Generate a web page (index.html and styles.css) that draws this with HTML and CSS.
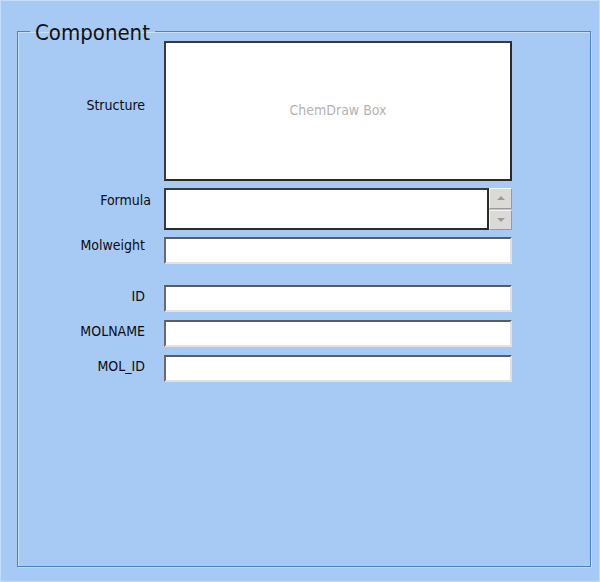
FILE: index.html
```html
<!DOCTYPE html>
<html>
<head>
<meta charset="utf-8">
<title>Component</title>
<link rel="stylesheet" href="styles.css">
</head>
<body>
<div class="window">
  <fieldset class="group">
    <legend class="group-title">Component</legend>
    <div class="rows">
      <div class="row row-structure">
        <span class="label label-structure">Structure</span>
        <div class="chemdraw">ChemDraw Box</div>
      </div>
      <div class="row row-formula">
        <span class="label label-formula">Formula</span>
        <div class="formula">
          <div class="formula-text"></div>
          <div class="spinner">
            <div class="spin-btn"><span class="arrow arrow-up"></span></div>
            <div class="spin-btn"><span class="arrow arrow-down"></span></div>
          </div>
        </div>
      </div>
      <div class="row row-mw">
        <span class="label label-mw">Molweight</span>
        <div class="field"></div>
      </div>
      <div class="row row-id">
        <span class="label">ID</span>
        <div class="field"></div>
      </div>
      <div class="row row-small">
        <span class="label">MOLNAME</span>
        <div class="field"></div>
      </div>
      <div class="row row-small">
        <span class="label">MOL_ID</span>
        <div class="field"></div>
      </div>
    </div>
  </fieldset>
</div>
</body>
</html>
```
FILE: styles.css
```css
html, body {
  margin: 0;
  padding: 0;
}
body {
  width: 600px;
  height: 582px;
  background: #a6caf4;
  font-family: "DejaVu Sans Condensed", "DejaVu Sans", sans-serif;
  font-stretch: condensed;
  color: #000;
  overflow: hidden;
}
.window {
  box-sizing: border-box;
  width: 600px;
  height: 582px;
  border: 1px solid #c3defb;
  padding: 18px 8px 14px 16px;
}
.group {
  box-sizing: border-box;
  height: 548px;
  margin: 0;
  padding: 0;
  min-width: 0;
  border: 1px solid #4a82d2;
  box-shadow: inset 1px 1px 0 #c6e0fc, 1px 1px 0 #c6e0fc;
}
.group-title {
  margin-left: 12px;
  padding: 4px 5px 0;
  font-size: 22px;
  line-height: 20px;
  color: #111;
}
.rows {
  display: flex;
  flex-direction: column;
  margin-top: -2px;
}
.row {
  display: flex;
  align-items: flex-start;
  margin-top: 8px;
}
.row-structure { margin-top: 0; }
.row-formula { margin-top: 7px; }
.row-mw { margin-top: 7px; }
.row-id { margin-top: 21px; }
.label {
  box-sizing: border-box;
  width: 127px;
  margin-right: 19px;
  text-align: right;
  font-size: 14px;
  line-height: 17px;
  padding-top: 3px;
  white-space: nowrap;
  color: #0c0c0c;
}
.label-structure { padding-top: 56px; }
.label-formula {
  width: 133px;
  margin-right: 13px;
  padding-top: 4px;
}
.label-mw { padding-top: 0; }
.chemdraw {
  box-sizing: border-box;
  width: 348px;
  height: 140px;
  background: #fff;
  border: 2px solid #2a2a2a;
  border-top-color: #3a3a3a;
  border-left-color: #3a3a3a;
  display: flex;
  align-items: center;
  justify-content: center;
  font-size: 14px;
  color: #b4b4b4;
  padding-bottom: 3px;
}
.formula {
  display: flex;
  width: 348px;
  height: 42px;
}
.formula-text {
  box-sizing: border-box;
  width: 325px;
  height: 42px;
  background: #fff;
  border: 2px solid #2a2a2a;
  border-top-color: #3a3a3a;
  border-left-color: #3a3a3a;
}
.spinner {
  display: flex;
  flex-direction: column;
  gap: 1px;
  width: 23px;
  background: #a6caf4;
}
.spin-btn {
  box-sizing: border-box;
  flex: 1;
  display: flex;
  align-items: center;
  justify-content: center;
  background: #dcdad6;
  border: 1px solid;
  border-color: #f4f4f4 #9a9a9a #9a9a9a #f4f4f4;
}
.arrow {
  width: 0;
  height: 0;
  border-left: 4px solid transparent;
  border-right: 4px solid transparent;
}
.arrow-up { border-bottom: 4px solid #9c9c9c; }
.arrow-down { border-top: 4px solid #9c9c9c; }
.field {
  box-sizing: border-box;
  width: 348px;
  height: 27px;
  background: #fff;
  border: 2px solid;
  border-color: #5c5c5c #e2e2e2 #e2e2e2 #6a6a6a;
}
```
